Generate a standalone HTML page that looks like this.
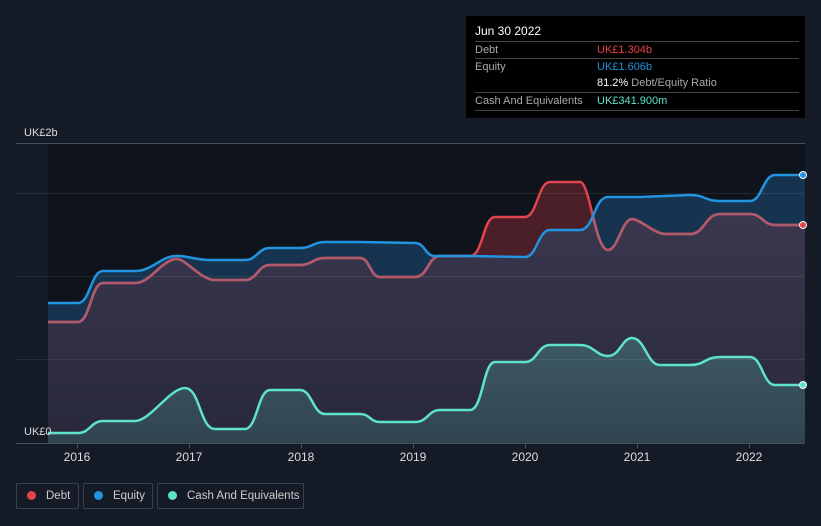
<!DOCTYPE html>
<html><head><meta charset="utf-8"><style>
body{margin:0;background:#151b26;width:821px;height:526px;overflow:hidden;font-family:"Liberation Sans",sans-serif;position:relative}
.tt{position:absolute;left:466px;top:16px;width:339px;height:102px;background:#000;color:#fff;font-size:11px}
.tt .r{position:absolute;left:9px;right:6px;border-top:1px solid #444;height:17px;line-height:17px;color:#aaa}
.tt .v{position:absolute;left:122px}
.leg{position:absolute;top:483px;height:26px;border:1px solid #3a3f4b;border-radius:2px;color:#ccc;font-size:11.5px;line-height:24px;box-sizing:border-box;white-space:nowrap}
.leg i{display:inline-block;width:9px;height:9px;border-radius:50%;margin:0 10px 0 10px;vertical-align:-1px}
</style></head><body>
<svg width="821" height="526" style="position:absolute;left:0;top:0">
<defs>
<linearGradient id="gp" x1="0" y1="0" x2="0" y2="1"><stop offset="0" stop-color="#403c55"/><stop offset="1" stop-color="#28283a"/></linearGradient>
<linearGradient id="gc" x1="0" y1="0" x2="0" y2="1"><stop offset="0" stop-color="#3e5a62"/><stop offset="1" stop-color="#304450"/></linearGradient>
<clipPath id="cd"><path d="M48,322 L78,322 C90,322 91,283 103,283 L135,283 C150,283 160,262 175,259 C185,257 200,280 215,280 L245,280 C257,280 258,265 270,265 L300,265 C312,265 313,258 325,258 L360,258 C370,258 370,277 380,277 L415,277 C428,277 428,256 440,256 L470,256 C483,256 483,217 495,217 L525,217 C537,217 538,182 550,182 L580,182 C590,182 595,250 608,250 C618,250 622,219 632,219 C640,219 655,234 665,234 L690,234 C705,234 705,214 720,214 L750,214 C762,214 763,225 775,225 L805,225 L805,443 L48,443Z"/></clipPath>
<clipPath id="ce"><path d="M48,303 L78,303 C90,303 91,271 103,271 L135,271 C152,271 160,257 175,256 C185,255 195,260 210,260 L245,260 C257,260 258,248 270,248 L300,248 C312,248 313,242 325,242 L360,242 L415,243 C425,243 425,256 435,256 L470,256 L525,257 C537,257 538,230 550,230 L580,230 C594,230 594,197 608,197 L640,197 L690,195 C705,195 705,201 720,201 L750,201 C762,201 763,175 775,175 L805,175 L805,443 L48,443Z"/></clipPath>
<path id="eq" d="M48,303 L78,303 C90,303 91,271 103,271 L135,271 C152,271 160,257 175,256 C185,255 195,260 210,260 L245,260 C257,260 258,248 270,248 L300,248 C312,248 313,242 325,242 L360,242 L415,243 C425,243 425,256 435,256 L470,256 L525,257 C537,257 538,230 550,230 L580,230 C594,230 594,197 608,197 L640,197 L690,195 C705,195 705,201 720,201 L750,201 C762,201 763,175 775,175 L805,175"/>
<path id="db" d="M48,322 L78,322 C90,322 91,283 103,283 L135,283 C150,283 160,262 175,259 C185,257 200,280 215,280 L245,280 C257,280 258,265 270,265 L300,265 C312,265 313,258 325,258 L360,258 C370,258 370,277 380,277 L415,277 C428,277 428,256 440,256 L470,256 C483,256 483,217 495,217 L525,217 C537,217 538,182 550,182 L580,182 C590,182 595,250 608,250 C618,250 622,219 632,219 C640,219 655,234 665,234 L690,234 C705,234 705,214 720,214 L750,214 C762,214 763,225 775,225 L805,225"/>
<path id="ca" d="M48,433 L78,433 C90,433 91,421 103,421 L135,421 C150,421 170,388 185,388 C200,388 200,429 215,429 L245,429 C257,429 258,390 270,390 L300,390 C312,390 313,414 325,414 L360,414 C370,414 370,422 380,422 L415,422 C428,422 428,410 440,410 L470,410 C483,410 483,362 495,362 L525,362 C537,362 538,345 550,345 L580,345 C594,345 596,356 608,356 C620,356 622,338 632,338 C645,338 647,365 660,365 L690,365 C705,365 705,357 720,357 L750,357 C762,357 763,385 775,385 L805,385"/>
</defs>
<rect x="48" y="143" width="757" height="300" fill="#0f131c"/>
<rect x="0" y="0" width="821" height="526" fill="#16344f" clip-path="url(#ce)"/>
<rect x="0" y="0" width="821" height="526" fill="#4a1f28" clip-path="url(#cd)"/>
<g clip-path="url(#cd)"><rect x="0" y="140" width="821" height="303" fill="url(#gp)" clip-path="url(#ce)"/></g>
<path d="M48,433 L78,433 C90,433 91,421 103,421 L135,421 C150,421 170,388 185,388 C200,388 200,429 215,429 L245,429 C257,429 258,390 270,390 L300,390 C312,390 313,414 325,414 L360,414 C370,414 370,422 380,422 L415,422 C428,422 428,410 440,410 L470,410 C483,410 483,362 495,362 L525,362 C537,362 538,345 550,345 L580,345 C594,345 596,356 608,356 C620,356 622,338 632,338 C645,338 647,365 660,365 L690,365 C705,365 705,357 720,357 L750,357 C762,357 763,385 775,385 L805,385 L805,443 L48,443Z" fill="url(#gc)"/>
<g stroke="#ffffff" stroke-opacity="0.08" stroke-width="1">
<line x1="16" y1="193.5" x2="805" y2="193.5"/>
<line x1="16" y1="276.5" x2="805" y2="276.5"/>
<line x1="16" y1="359.5" x2="805" y2="359.5"/>
</g>
<line x1="16" y1="143.5" x2="805" y2="143.5" stroke="#4a4f5a"/>
<use href="#db" fill="none" stroke="#e0454d" stroke-width="2.5"/>
<use href="#db" fill="none" stroke="#b05a6e" stroke-width="2.6" clip-path="url(#ce)"/>
<use href="#eq" fill="none" stroke="#2394df" stroke-width="2.5"/>
<use href="#ca" fill="none" stroke="#5ee3c8" stroke-width="2.5"/>
<circle cx="803" cy="175" r="3.5" fill="#2394df" stroke="#fff" stroke-width="1"/>
<circle cx="803" cy="225" r="3.5" fill="#e0454d" stroke="#fff" stroke-width="1"/>
<circle cx="803" cy="385" r="3.5" fill="#5ee3c8" stroke="#fff" stroke-width="1"/>
<line x1="16" y1="443.5" x2="805" y2="443.5" stroke="#4a4f5a"/>
<g stroke="#4a4f5a"><line x1="77.5" y1="443" x2="77.5" y2="448"/><line x1="189.5" y1="443" x2="189.5" y2="448"/><line x1="301.5" y1="443" x2="301.5" y2="448"/><line x1="413.5" y1="443" x2="413.5" y2="448"/><line x1="525.5" y1="443" x2="525.5" y2="448"/><line x1="637.5" y1="443" x2="637.5" y2="448"/><line x1="749.5" y1="443" x2="749.5" y2="448"/></g>
<g fill="#ddd" font-size="12" text-anchor="middle" font-family="Liberation Sans"><text x="77" y="461">2016</text><text x="189" y="461">2017</text><text x="301" y="461">2018</text><text x="413" y="461">2019</text><text x="525" y="461">2020</text><text x="637" y="461">2021</text><text x="749" y="461">2022</text></g>
<text x="24" y="136" fill="#ddd" font-size="11" font-family="Liberation Sans">UK£2b</text>
<text x="24" y="435" fill="#ddd" font-size="11" font-family="Liberation Sans">UK£0</text>
</svg>
<div class="tt">
<div style="position:absolute;left:9px;top:8px;font-size:12px">Jun 30 2022</div>
<div class="r" style="top:25px">Debt<span class="v" style="color:#e8424a">UK£1.304b</span></div>
<div class="r" style="top:42px">Equity<span class="v" style="color:#2394df">UK£1.606b</span></div>
<div class="r" style="top:59px;border-top:none"><span class="v"><b style="color:#fff;font-weight:normal">81.2%</b> Debt/Equity Ratio</span></div>
<div class="r" style="top:76px">Cash And Equivalents<span class="v" style="color:#5ee3c8">UK£341.900m</span></div>
<div style="position:absolute;left:9px;right:6px;top:94px;border-top:1px solid #444"></div>
</div>
<div class="leg" style="left:16px;width:63px"><i style="background:#e8424a"></i>Debt</div>
<div class="leg" style="left:83px;width:70px"><i style="background:#2394df"></i>Equity</div>
<div class="leg" style="left:157px;width:147px"><i style="background:#5ee3c8"></i>Cash And Equivalents</div>
</body></html>
